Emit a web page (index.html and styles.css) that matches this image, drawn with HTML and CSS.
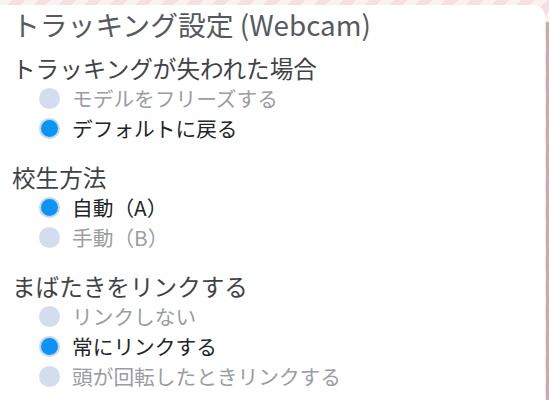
FILE: index.html
```html
<!DOCTYPE html>
<html lang="ja">
<head>
<meta charset="utf-8">
<link rel="stylesheet" href="styles.css">
</head>
<body>
<div class="card">
  <h1 class="title">トラッキング設定 (Webcam)</h1>
  <section class="group">
    <h2 class="group-title">トラッキングが失われた場合</h2>
    <ul class="options">
      <li class="option"><span class="radio"></span>モデルをフリーズする</li>
      <li class="option checked"><span class="radio"></span>デフォルトに戻る</li>
    </ul>
  </section>
  <section class="group">
    <h2 class="group-title">校生方法</h2>
    <ul class="options">
      <li class="option checked"><span class="radio"></span>自動（A）</li>
      <li class="option"><span class="radio"></span>手動（B）</li>
    </ul>
  </section>
  <section class="group">
    <h2 class="group-title">まばたきをリンクする</h2>
    <ul class="options">
      <li class="option"><span class="radio"></span>リンクしない</li>
      <li class="option checked"><span class="radio"></span>常にリンクする</li>
      <li class="option"><span class="radio"></span>頭が回転したときリンクする</li>
    </ul>
  </section>
</div>
</body>
</html>
```
FILE: styles.css
```css
html, body {
  margin: 0;
  padding: 0;
  height: 400px;
  overflow: hidden;
}
body {
  font-family: "Noto Sans CJK JP", "Noto Sans", sans-serif;
  background:
    linear-gradient(#c7abad, #c7abad) right 0 top 22px / 3px 100% no-repeat,
    repeating-linear-gradient(135deg, #fcf1f1 0 9px, #f5dfe0 9px 18px);
  display: flex;
}
.card {
  flex: 1;
  margin: 5px 4px 0 -12px;
  padding: 0 0 0 24px;
  background: #fff;
  border-radius: 12px 12px 0 0;
  height: 395px;
  box-sizing: border-box;
}
.title {
  margin: 0;
  font-weight: 400;
  font-size: 27.8px;
  line-height: 38px;
  color: #555a60;
}
.group {
  margin-top: 10px;
}
.group + .group {
  margin-top: 19px;
}
.group-title {
  margin: 0;
  font-weight: 400;
  font-size: 23.6px;
  line-height: 30px;
  color: #3f4348;
}
.options {
  list-style: none;
  margin: 0;
  padding: 0 0 0 27px;
}
.option {
  display: flex;
  align-items: center;
  gap: 12px;
  font-size: 20.7px;
  line-height: 30px;
  color: #9a9da2;
}
.option.checked {
  color: #222528;
}
.radio {
  width: 21px;
  height: 21px;
  border-radius: 50%;
  background: #d2ddee;
  box-sizing: border-box;
  flex: none;
}
.option.checked .radio {
  background: #0a94f6;
  border: 2px solid #c6d7ef;
}
```
